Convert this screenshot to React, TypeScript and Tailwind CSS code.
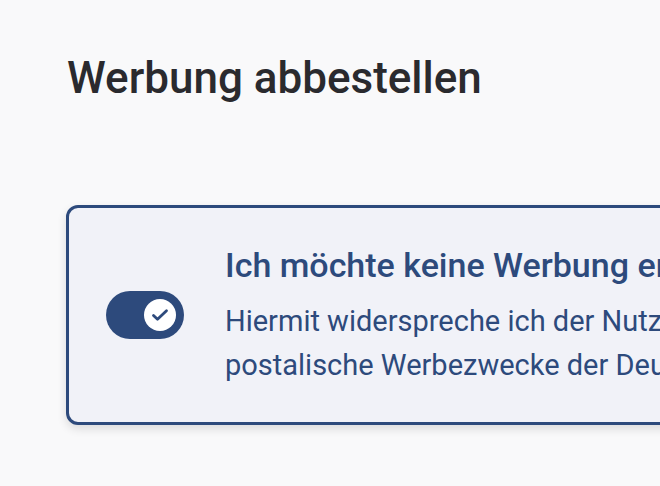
import React from "react";

export default function App() {
  return (
    <div className="w-screen h-screen overflow-hidden bg-[#f9f9fa]" style={{ fontFamily: "Roboto, 'Noto Sans', sans-serif" }}>
      <div className="pl-[67px] pt-[52px]">
        <h1 className="text-[44px] leading-[52px] font-medium text-[#2a2a2e] whitespace-nowrap">Werbung abbestellen</h1>
        <div className="mt-[101px] -ml-px w-[1000px] h-[220px] rounded-[12px] border-[3px] border-[#2d4a7c] bg-[#f1f2f8] shadow-[0_4px_10px_rgba(0,0,0,0.12)] flex items-center pl-[37px]">
          <div className="w-[78px] h-[48px] rounded-full bg-[#2d4a7c] flex items-center justify-end pr-[8px] shrink-0">
            <div className="w-[32px] h-[32px] rounded-full bg-white flex items-center justify-center">
              <svg width="18" height="18" viewBox="0 0 18 18" fill="none">
                <path d="M2.5 9.5l4 3.8L15.5 4.8" stroke="#2d4a7c" strokeWidth="2.8" strokeLinecap="round" strokeLinejoin="round" />
              </svg>
            </div>
          </div>
          <div className="self-start mt-[37px] ml-[41px] text-[#2d4a7c] whitespace-nowrap">
            <div className="text-[34px] leading-[40px] font-medium">Ich möchte keine Werbung erhalten</div>
            <div className="mt-[14px] text-[29px] leading-[44px]">
              Hiermit widerspreche ich der Nutzung meiner Daten für
              <br />
              postalische Werbezwecke der Deutschen Post.
            </div>
          </div>
        </div>
      </div>
    </div>
  );
}
